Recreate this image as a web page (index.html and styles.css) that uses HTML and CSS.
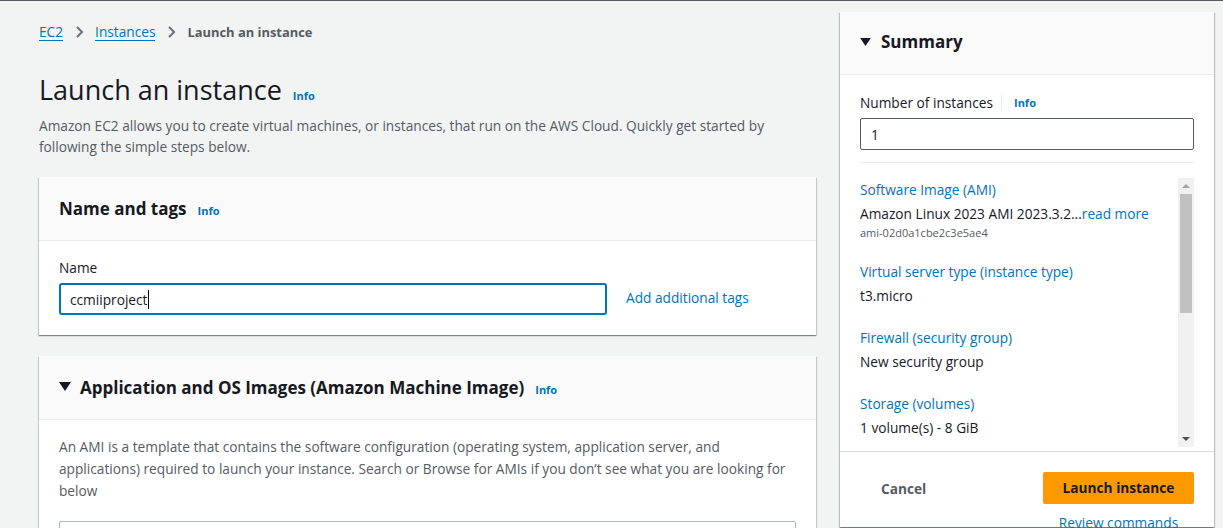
FILE: index.html
```html
<!DOCTYPE html>
<html>
<head>
<meta charset="utf-8">
<link rel="stylesheet" href="styles.css">
</head>
<body>
<div class="page">
  <main class="main">
    <nav class="crumbs">
      <a class="crumb-link">EC2</a>
      <svg class="chev" width="16" height="16" viewBox="0 0 16 16"><path d="M6 3l5 5-5 5" fill="none" stroke="#687078" stroke-width="2"/></svg>
      <a class="crumb-link">Instances</a>
      <svg class="chev" width="16" height="16" viewBox="0 0 16 16"><path d="M6 3l5 5-5 5" fill="none" stroke="#687078" stroke-width="2"/></svg>
      <span class="crumb-cur">Launch an instance</span>
    </nav>
    <div class="title-row">
      <h1 class="h1">Launch an instance</h1>
      <a class="info">Info</a>
    </div>
    <p class="lead">Amazon EC2 allows you to create virtual machines, or instances, that run on the AWS Cloud. Quickly get started by following the simple steps below.</p>

    <section class="card">
      <header class="card-head">
        <h2 class="h2">Name and tags</h2><a class="info">Info</a>
      </header>
      <div class="card-body name-body">
        <div class="field">
          <label class="label">Name</label>
          <div class="input focused"><span>ccmiiproject</span><span class="caret"></span></div>
        </div>
        <a class="link add-tags">Add additional tags</a>
      </div>
    </section>

    <section class="card ami">
      <header class="card-head">
        <svg class="tri" width="12" height="9" viewBox="0 0 12 9"><path d="M0 0h12L6 9z" fill="#16191f"/></svg><h2 class="h2">Application and OS Images (Amazon Machine Image)</h2><a class="info">Info</a>
      </header>
      <div class="card-body">
        <p class="body-text">An AMI is a template that contains the software configuration (operating system, application server, and applications) required to launch your instance. Search or Browse for AMIs if you don’t see what you are looking for below</p>
        <div class="search"></div>
      </div>
    </section>
  </main>

  <aside class="panel">
    <header class="panel-head">
      <svg class="tri sum-tri" width="11" height="8" viewBox="0 0 12 9"><path d="M0 0h12L6 9z" fill="#16191f"/></svg><h2 class="h2">Summary</h2>
    </header>
    <div class="panel-body">
      <div class="num-label"><span>Number of instances</span><span class="sep"></span><a class="info">Info</a></div>
      <div class="input plain">1</div>
      <div class="divider"></div>
      <div class="scroll">
        <div class="scroll-content">
          <div class="item">
            <a class="link">Software Image (AMI)</a>
            <div class="val">Amazon Linux 2023 AMI 2023.3.2...<a class="link">read more</a></div>
            <div class="small">ami-02d0a1cbe2c3e5ae4</div>
          </div>
          <div class="item">
            <a class="link">Virtual server type (instance type)</a>
            <div class="val">t3.micro</div>
          </div>
          <div class="item">
            <a class="link">Firewall (security group)</a>
            <div class="val">New security group</div>
          </div>
          <div class="item">
            <a class="link">Storage (volumes)</a>
            <div class="val">1 volume(s) - 8 GiB</div>
          </div>
        </div>
        <div class="sbar">
          <span class="arr up"></span>
          <span class="thumb"></span>
          <span class="fill"></span>
          <span class="arr down"></span>
        </div>
      </div>
    </div>
    <footer class="panel-foot">
      <button class="btn-cancel">Cancel</button>
      <div class="foot-right">
        <button class="btn-primary">Launch instance</button>
        <a class="link review">Review commands</a>
      </div>
    </footer>
  </aside>
</div>
</body>
</html>
```

FILE: styles.css
```css
* { box-sizing: border-box; }
html, body { margin: 0; padding: 0; }
body {
  width: 1223px;
  height: 528px;
  overflow: hidden;
  background: #f2f3f3;
  font-family: "Open Sans", "Noto Sans", sans-serif;
  font-size: 13.7px;
  color: #16191f;
  border-top: 1px solid #545b64;
}
a { text-decoration: none; cursor: pointer; }
.page {
  display: flex;
  align-items: flex-start;
  padding-left: 39px;
}
.main {
  width: 777px;
  flex: none;
}
.crumbs {
  display: flex;
  align-items: center;
  gap: 8px;
  height: 20px;
  margin-top: 21px;
  font-size: 13.7px;
}
.crumb-link {
  color: #0073bb;
  border-bottom: 1px solid #0073bb;
  line-height: 17px;
}
.chev { flex: none; }
.crumb-cur { color: #545b64; font-weight: 700; font-size: 12.9px; }
.title-row {
  display: flex;
  align-items: baseline;
  gap: 11px;
  margin-top: 31px;
}
.h1 {
  margin: 0;
  font-size: 27px;
  font-weight: 400;
  line-height: 34px;
  color: #16191f;
}
.info {
  color: #0073bb;
  font-size: 11px;
  font-weight: 700;
}
.lead {
  margin: 8px 0 0;
  color: #545b64;
  font-size: 13.7px;
  line-height: 21px;
}
.card {
  background: #fff;
  box-shadow: 0 1px 1px 0 rgba(0,28,36,.3), 1px 1px 1px 0 rgba(0,28,36,.15), -1px 1px 1px 0 rgba(0,28,36,.15);
  margin-top: 20px;
}
.card.ami { margin-top: 21px; }
.card-head {
  display: flex;
  align-items: baseline;
  gap: 11px;
  background: #fafafa;
  border-bottom: 1px solid #eaeded;
  padding: 19px 20px 0;
  height: 64px;
}
.h2 {
  margin: 0;
  font-size: 17px;
  font-weight: 700;
  line-height: 26px;
  color: #16191f;
}
.tri { flex: none; align-self: flex-start; margin-top: 7px; }
.card-head .tri { margin-right: -2px; }
.sum-tri { margin-top: 9px; }
.card-body { padding: 18px 20px 20px; }
.name-body {
  display: flex;
  align-items: flex-end;
  gap: 20px;
}
.field { display: flex; flex-direction: column; gap: 6px; }
.label { font-size: 13.7px; line-height: 18px; color: #16191f; }
.input {
  height: 32px;
  display: flex;
  align-items: center;
  padding: 0 10px;
  font-size: 13.7px;
  background: #fff;
}
.input.focused {
  width: 548px;
  border: 2px solid #0073bb;
  border-radius: 3px;
  padding-left: 9px;
}
.caret {
  width: 1px;
  height: 19px;
  background: #000;
  margin-left: 1px;
}
.add-tags { margin-bottom: 8px; margin-left: -1px; }
.link { color: #0073bb; font-size: 13.7px; }
.ami .card-body { padding-top: 16px; }
.body-text {
  margin: 0;
  color: #545b64;
  font-size: 13.7px;
  line-height: 22px;
}
.search {
  margin-top: 19px;
  height: 32px;
  border: 1px solid #aab7b8;
  border-radius: 2px;
}

.panel {
  width: 374px;
  margin-left: 24px;
  margin-top: 11px;
  background: #fff;
  box-shadow: 0 1px 1px 0 rgba(0,28,36,.3), 1px 1px 1px 0 rgba(0,28,36,.2), -1px 1px 1px 0 rgba(0,28,36,.2);
  flex: none;
}
.panel-head {
  display: flex;
  align-items: baseline;
  gap: 10px;
  background: #fafafa;
  border-bottom: 1px solid #eaeded;
  height: 63px;
  padding: 17px 20px 0;
}
.panel-body { padding: 19px 20px 0; }
.num-label {
  display: flex;
  align-items: center;
  font-size: 13.7px;
  line-height: 18px;
  height: 18px;
  margin-bottom: 6px;
}
.sep {
  width: 1px;
  height: 17px;
  background: #eaeded;
  margin: 0 12px 0 8px;
}
.input.plain {
  width: 334px;
  height: 32px;
  border: 1px solid #545b64;
  border-radius: 2px;
}
.divider {
  height: 1px;
  background: #eaeded;
  margin-top: 12px;
  width: 334px;
}
.scroll {
  display: flex;
  margin-top: 15px;
  height: 269px;
  overflow: hidden;
}
.scroll-content { flex: 1; }
.item { display: flex; flex-direction: column; margin-bottom: 18px; }
.item .link { line-height: 24px; }
.val { font-size: 13.7px; line-height: 24px; color: #16191f; }
.small { font-size: 11px; color: #545b64; line-height: 14px; margin-top: 0; margin-bottom: 2px; }
.sbar {
  width: 16px;
  flex: none;
  background: #f1f1f1;
  display: flex;
  flex-direction: column;
  align-items: center;
}
.arr {
  width: 0; height: 0;
  border-left: 4px solid transparent;
  border-right: 4px solid transparent;
  margin: 6px 0;
}
.arr.up { border-bottom: 4px solid #a3a3a3; }
.arr.down { border-top: 4px solid #505050; }
.thumb { width: 12px; height: 119px; background: #c1c1c1; }
.fill { flex: 1; }
.panel-foot {
  border-top: 1px solid #d5dbdb;
  margin-top: 4px;
  display: flex;
  justify-content: space-between;
  padding: 20px 20px 0 20px;
  height: 76px;
}
.btn-cancel {
  background: none;
  border: none;
  font-family: inherit;
  font-size: 13.7px;
  font-weight: 700;
  color: #545b64;
  height: 32px;
  padding: 0 21px;
}
.foot-right { display: flex; flex-direction: column; align-items: center; }
.btn-primary {
  width: 151px;
  height: 32px;
  flex: none;
  padding: 0;
  line-height: 32px;
  background: #ff9900;
  border: none;
  border-radius: 2px;
  font-family: inherit;
  font-size: 13.7px;
  font-weight: 700;
  color: #16191f;
}
.review { margin-top: 10px; line-height: 18px; }
```
